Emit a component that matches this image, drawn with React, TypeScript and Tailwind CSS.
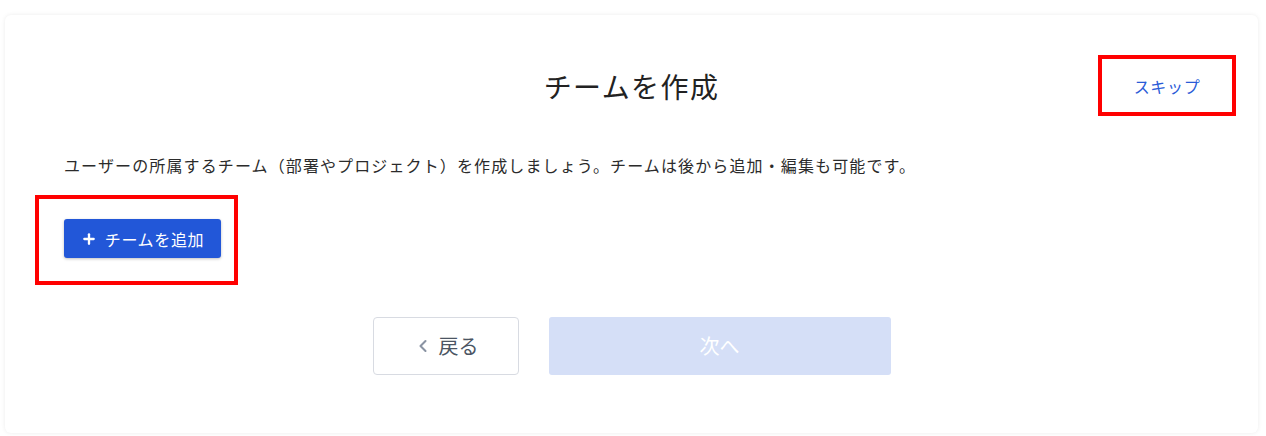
import { Plus, ChevronLeft } from 'lucide-react'

const FONT = "font-['Noto_Sans_CJK_JP','Noto_Sans',sans-serif]"

export default function App() {
  return (
    <div className={`${FONT} min-h-[436px] bg-white pt-[15px] px-[5px] pr-[8px]`}>
      <div className="flex h-[418px] flex-col rounded-md bg-white shadow-[0_0_4px_rgba(0,0,0,0.08)]">
        {/* header */}
        <div className="mt-[40px] grid grid-cols-[1fr_auto_1fr] items-center px-[22px]">
          <div />
          <h1 className="text-[28px] font-normal tracking-[0.05em] text-[#222]">チームを作成</h1>
          <div className="flex justify-end">
            <div className="flex h-[61px] w-[138px] items-center justify-center border-4 border-[#ff0000]">
              <button className="text-[16px] tracking-[0.04em] text-[#2a5bd7]">スキップ</button>
            </div>
          </div>
        </div>

        <p className="mt-[37px] pl-[59px] text-[16px] leading-[24px] tracking-[0.07em] text-[#2b2b2b]">
          ユーザーの所属するチーム（部署やプロジェクト）を作成しましょう。チームは後から追加・編集も可能です。
        </p>

        <div className="mt-[18px] ml-[30px] h-[90px] w-[203px] border-4 border-[#ff0000] pt-[20px] pl-[25px]">
          <button className="flex h-[39px] w-[157px] items-center justify-center gap-[8px] rounded-[3px] bg-[#2257d8] text-[16px] tracking-[0.04em] text-white shadow-[0_1px_3px_rgba(0,0,0,0.25)]">
            <Plus size={16} strokeWidth={3.5} />
            チームを追加
          </button>
        </div>

        <div className="mt-[32px] flex justify-center gap-[30px]">
          <button className="flex h-[58px] w-[146px] items-center justify-center gap-[6px] rounded-[4px] border border-[#d8dbe2] bg-white text-[20px] text-[#4b5563]">
            <ChevronLeft size={20} strokeWidth={2.5} className="text-[#8a93a3]" />
            戻る
          </button>
          <button className="flex h-[58px] w-[342px] items-center justify-center rounded-[3px] bg-[#d5dff7] text-[20px] text-white">
            次へ
          </button>
        </div>
      </div>
    </div>
  )
}
